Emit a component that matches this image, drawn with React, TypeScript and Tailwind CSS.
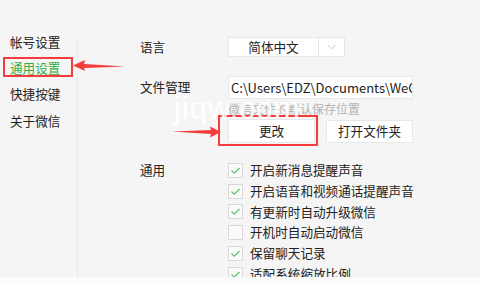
import React from 'react';

const font = { fontFamily: '"Noto Sans CJK SC", "Noto Sans", sans-serif' };

const sideItems = ['帐号设置', '通用设置', '快捷按键', '关于微信'];

const options = [
  { label: '开启新消息提醒声音', checked: true },
  { label: '开启语音和视频通话提醒声音', checked: true },
  { label: '有更新时自动升级微信', checked: true },
  { label: '开机时自动启动微信', checked: false },
  { label: '保留聊天记录', checked: true },
  { label: '适配系统缩放比例', checked: true },
];

function Check({ checked }: { checked: boolean }) {
  return (
    <div className="w-[15px] h-[15px] shrink-0 border border-[#d9d9d9] bg-[#fafafa] flex items-center justify-center">
      {checked && (
        <svg width="13" height="13" viewBox="0 0 13 13">
          <path d="M2.5 6.5 L5.3 9.2 L10.5 4" fill="none" stroke="#5cc46f" strokeWidth="1.2" />
        </svg>
      )}
    </div>
  );
}

export default function App() {
  return (
    <div className="relative w-[480px] h-[283px] bg-[#f5f5f5] text-[#222] overflow-hidden" style={font}>
      <div className="flex h-[277px] overflow-hidden">
        {/* sidebar */}
        <div className="w-[77px] shrink-0 pt-[29px] pl-[10px] text-[12.6px]">
          {sideItems.map((s, i) => (
            <div key={s} className={`h-[26.3px] flex items-center ${i === 1 ? 'text-[#2fae3f]' : 'text-[#222]'}`}>
              {s}
            </div>
          ))}
        </div>
        <div className="w-px bg-[#e9e9e9] mt-[37px]" />

        {/* settings */}
        <div className="flex-1 pl-[62px] pt-[37px] text-[12.6px]">
          <div className="flex h-[20px] items-center">
            <div className="w-[88px]">语言</div>
            <div className="flex h-[20px] bg-white border border-[#e8e8e8]">
              <div className="w-[89px] flex items-center justify-center">简体中文</div>
              <div className="w-[26px] border-l border-[#e8e8e8] flex items-center justify-center">
                <svg width="9" height="6" viewBox="0 0 9 6">
                  <path d="M0.5 0.8 L4.5 4.8 L8.5 0.8" fill="none" stroke="#c8c8c8" strokeWidth="1" />
                </svg>
              </div>
            </div>
          </div>

          <div className="flex h-[23px] items-center mt-[19px]">
            <div className="w-[88px]">文件管理</div>
            <div className="w-[185px] h-[23px] bg-white border border-[#e8e8e8] pl-[2px] flex items-center overflow-hidden whitespace-nowrap text-[13px]">
              C:\Users\EDZ\Documents\WeChat Files
            </div>
          </div>
          <div className="pl-[88px] mt-[2px] h-[15px] text-[12px] leading-[15px] text-[#b3b3b3]">微信文件的默认保存位置</div>

          <div className="flex pl-[88px] mt-[3px]">
            <div className="w-[87px] h-[24px] bg-white border border-[#e8e8e8] flex items-center justify-center">更改</div>
            <div className="w-[87px] h-[23px] mt-[1px] ml-[11px] bg-white border border-[#e8e8e8] flex items-center justify-center">打开文件夹</div>
          </div>

          <div className="flex mt-[17px]">
            <div className="w-[88px] h-[20.8px] flex items-center">通用</div>
            <div className="flex flex-col">
              {options.map((o) => (
                <div key={o.label} className="h-[20.8px] flex items-center gap-[7px]">
                  <Check checked={o.checked} />
                  <span>{o.label}</span>
                </div>
              ))}
            </div>
          </div>
        </div>
      </div>
      <div className="h-[6px] bg-[#fbfbfb]" />

      {/* annotations */}
      <div className="absolute left-[3px] top-[57px] w-[70px] h-[20px] border-2 border-[#f53c3c]" />
      <div className="absolute left-[218px] top-[115px] w-[100px] h-[31px] border-2 border-[#f53c3c]" />
      <svg className="absolute left-[70px] top-[58px]" width="58" height="16" viewBox="0 0 58 16">
        <polygon points="3,7.5 15,2 14,6 55,8.5 14,10 15,13" fill="#f53c3c" />
      </svg>
      <svg className="absolute left-[170px] top-[124px]" width="54" height="16" viewBox="0 0 54 16">
        <polygon points="51,8 40,2.5 41,6 2,7.5 41,10 40,13.5" fill="#f53c3c" />
      </svg>
      <div
        className="absolute left-[174px] top-[86px] text-[31px] text-white/90 tracking-[1px]"
        style={{ fontFamily: '"Liberation Sans", sans-serif' }}
      >
        jiqw.com
      </div>
    </div>
  );
}
